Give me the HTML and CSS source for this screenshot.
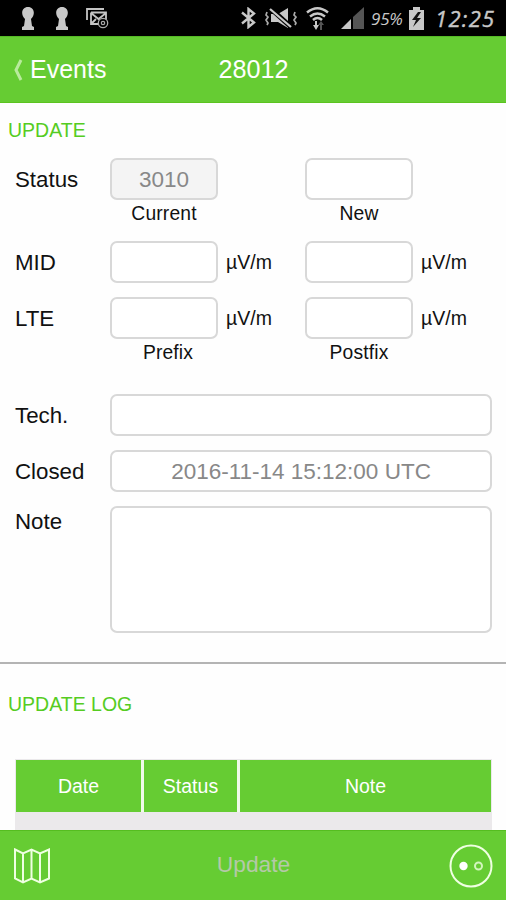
FILE: index.html
```html
<!DOCTYPE html>
<html lang="en">
<head>
    <meta charset="UTF-8">
    <meta name="viewport" content="width=device-width, initial-scale=1.0">
    <title>Event 28012</title>
    <link rel="stylesheet" href="styles.css">
</head>
<body>
    <div class="status-bar">
        <svg class="keyhole" width="14" height="23" viewBox="0 0 14 23"><path d="M4 12C-1 7 1 0 7 0s8 7 3 12l1 7 2 1v3H1v-3l2-1z"/></svg>
        <svg class="keyhole" width="14" height="23" viewBox="0 0 14 23"><path d="M4 12C-1 7 1 0 7 0s8 7 3 12l1 7 2 1v3H1v-3l2-1z"/></svg>
        <svg class="mail" width="23" height="21" viewBox="0 0 23 21">
            <path d="M1 12V1h17M5 4.500h15v7M5 4.500V16h7M5 5l7.500 6L20 5M5 16l5-5" fill="none" stroke="#c4c4c4" stroke-width="1.800"/>
            <circle cx="17" cy="15" r="4.700" fill="none" stroke="#aaa" stroke-width="1.300"/>
            <circle cx="17" cy="15" r="1.700" fill="none" stroke="#aaa" stroke-width="1.200"/>
        </svg>

        <svg class="bluetooth" width="15" height="22" viewBox="0 0 15 22"><path d="M1 5.500l12 10L7.500 20V2L13 6.500l-12 10" fill="none" stroke="#c8c8c8" stroke-width="2.400"/></svg>
        <svg class="muted" width="33" height="21" viewBox="0 0 33 21">
            <path d="M6 6h7l10-6v20l-10-6H6z"/>
            <path d="M5 0l21 19" stroke="#000" stroke-width="5"/>
            <path d="M5 1l21 18" stroke="#c8c8c8" stroke-width="2.300"/>
            <path d="M2 4l-1 3 2 2-2 3 2 3-1 2M30 4l-1 3 2 2-2 3 2 3-1 2" fill="none" stroke="#aaa" stroke-width="1.700"/>
        </svg>
        <svg class="wifi" width="25" height="25" viewBox="0 0 25 25">
            <path d="M2 6.500Q12.500-2 23 6.500M5 10.500q7.500-6 15 0M8 14q4.500-4 9 0" fill="none" stroke="#c8c8c8" stroke-width="2.500"/>
            <path d="M8 19h2v-4h2v4h2l-3 5z"/>
            <path d="M13 19l3-4 3 4h-2v5h-2v-5z" fill="#555"/>
        </svg>
        <svg class="signal" width="23" height="22" viewBox="0 0 23 22"><path d="M0 22L10 12v10z"/><path d="M12 10L23 0v22H12z" fill="#555"/></svg>
        <span class="battery-level">95%</span>
        <svg class="battery" width="15" height="23" viewBox="0 0 15 23"><path d="M4 0h7v3h4v20H0V3h4z"/><path d="M9 5l-6 8h4l-3 7 8-9H8l4-6z" fill="#111"/></svg>
        <span class="clock">12:25</span>
    </div>

    <header class="navbar">
        <a class="back" href="#">
            <svg width="10" height="22" viewBox="0 0 10 22"><path d="M8 1L3 11l5 10" fill="none" stroke="#b9eb9c" stroke-width="3"/></svg>
            Events
        </a>
        <h1>28012</h1>
    </header>

    <main>
        <h2>UPDATE</h2>
        <form class="update-form">
            <div class="row">
                <label>Status</label>
                <div class="field"><input type="text" value="3010" disabled><small>Current</small></div>
                <span class="unit"></span>
                <div class="field"><input type="text"><small>New</small></div>
            </div>
            <div class="row mid">
                <label>MID</label>
                <div class="field"><input type="text"></div>
                <span class="unit">µV/m</span>
                <div class="field"><input type="text"></div>
                <span class="unit">µV/m</span>
            </div>
            <div class="row lte">
                <label>LTE</label>
                <div class="field"><input type="text"><small class="prefix">Prefix</small></div>
                <span class="unit">µV/m</span>
                <div class="field"><input type="text"><small>Postfix</small></div>
                <span class="unit">µV/m</span>
            </div>
            <div class="row wide">
                <label>Tech.</label>
                <input type="text">
            </div>
            <div class="row wide">
                <label>Closed</label>
                <input type="text" value="2016-11-14 15:12:00 UTC" readonly>
            </div>
            <div class="row wide note">
                <label>Note</label>
                <textarea></textarea>
            </div>
        </form>

        <section class="log">
            <h2>UPDATE LOG</h2>
            <div class="log-table">
                <div class="log-head">
                    <span>Date</span>
                    <span>Status</span>
                    <span>Note</span>
                </div>
            </div>
        </section>
    </main>

    <footer class="toolbar">
        <svg width="36" height="36" viewBox="0 0 36 36"><path d="M1 1.500l8 4 8.500-4 8.500 4 9-4v29l-9 4-8.500-4-8.500 4-8-4zM9 5.500v29M17.500 1.500v29M26 5.500v29" fill="none" stroke="#efffe2" stroke-width="2"/></svg>
        <span>Update</span>
        <svg width="44" height="44" viewBox="0 0 44 44">
            <circle cx="22" cy="22" r="20.500" fill="none" stroke="#efffe2" stroke-width="2"/>
            <circle cx="14.500" cy="22" r="4.200" fill="#fff"/>
            <circle cx="29.500" cy="22" r="3.500" fill="none" stroke="#d2f5bd" stroke-width="2"/>
        </svg>
    </footer>
</body>
</html>
```
FILE: styles.css
```css
* {
    box-sizing: border-box;
}
body {
    font-family: "Liberation Sans", Arial, sans-serif;
    background-color: #fefefe;
    color: #111;
    margin: 0;
    height: 900px;
    display: flex;
    flex-direction: column;
    overflow: hidden;
}
svg {
    display: block;
    flex: none;
}

/* Phone status bar */
.status-bar {
    height: 36px;
    flex: none;
    display: flex;
    align-items: center;
    background-color: #000;
    color: #c8c8c8;
    padding-left: 21px;
}
.status-bar svg {
    fill: #c8c8c8;
}
.keyhole {
    margin-right: 20px;
}
.mail {
    margin-left: -3px;
}
.bluetooth {
    margin-left: 132px;
}
.muted {
    margin-left: 9px;
}
.wifi {
    margin-left: 7px;
}
.signal {
    margin-left: 11px;
}
.battery-level,
.clock {
    font-family: "Open Sans", "Noto Sans", sans-serif;
    font-style: italic;
    white-space: nowrap;
}
.battery-level {
    width: 34px;
    margin-left: 7px;
    font-size: 17px;
    letter-spacing: -0.2px;
}
.battery {
    margin-left: 4px;
}
.clock {
    margin-left: 11px;
    font-size: 22px;
    letter-spacing: 1.3px;
    -webkit-text-stroke: 0.4px #c8c8c8;
}

/* Top navigation */
.navbar {
    height: 67px;
    flex: none;
    display: grid;
    grid-template-columns: 1fr auto 1fr;
    align-items: center;
    background-color: #66cc33;
    border-top: 1px solid #55b925;
    border-bottom: 1px solid #5bc41f;
    color: #fff;
    padding: 0 12px 0 13px;
}
.back {
    display: flex;
    align-items: center;
    gap: 7px;
    font-size: 25px;
    color: #fff;
    text-decoration: none;
}
h1 {
    margin: 0;
    font-size: 25.2px;
    font-weight: normal;
}

main {
    flex: 1;
    overflow: hidden;
}
h2 {
    margin: 0;
    padding: 16px 8px 0;
    font-size: 19.5px;
    line-height: 23px;
    font-weight: normal;
    color: #55cc22;
}

/* Update form */
.update-form {
    padding: 16px 14px 29px 15px;
    border-bottom: 2px solid #b4b4b4;
}
.row {
    display: grid;
    grid-template-columns: 95px 108px 87px 108px 79px;
}
.row.mid,
.row.lte,
.row.wide {
    margin-top: 14px;
}
.row.mid {
    margin-top: 13px;
}
.row.lte + .row {
    margin-top: 27px;
}
.row.wide {
    grid-template-columns: 95px 1fr;
}
label {
    font-size: 22.3px;
    line-height: 43px;
    height: 42px;
}
.note label {
    line-height: 32px;
}
input,
textarea {
    display: block;
    width: 100%;
    height: 42px;
    border: 2px solid #d8d8d8;
    border-radius: 7px;
    background-color: #fff;
    font-family: inherit;
    font-size: 22.5px;
    color: #888;
    text-align: center;
    padding: 1px 0 0;
    outline: none;
}
input:disabled {
    background-color: #f4f4f4;
}
textarea {
    height: 127px;
    resize: none;
}
small {
    display: block;
    font-size: 19.3px;
    line-height: 28px;
    letter-spacing: 0.15px;
    text-align: center;
}
.prefix {
    padding-left: 8px;
}
.unit {
    padding-left: 8px;
    font-size: 19.5px;
    line-height: 43px;
    height: 42px;
}

/* Update log */
.log h2 {
    padding-top: 29px;
}
.log-table {
    margin: 43px 14px 0 15px;
    height: 100px;
    padding: 1px 1px 0;
    background-color: #ebe9eb;
}
.log-head {
    display: grid;
    grid-template-columns: 125px 93px 1fr;
    gap: 3px;
    background-color: #f0fae9;
}
.log-head span {
    background-color: #66cc33;
    color: #fff;
    font-size: 19.5px;
    line-height: 52px;
    text-align: center;
}

/* Bottom toolbar */
.toolbar {
    height: 70px;
    flex: none;
    display: grid;
    grid-template-columns: 44px 1fr 44px;
    align-items: center;
    background-color: #66cc33;
    border-top: 1px solid #55bd20;
    padding: 0 13px 0 14px;
}
.toolbar span {
    font-size: 22.8px;
    color: #b4c9a8;
    text-align: center;
    padding-bottom: 3px;
}
```
